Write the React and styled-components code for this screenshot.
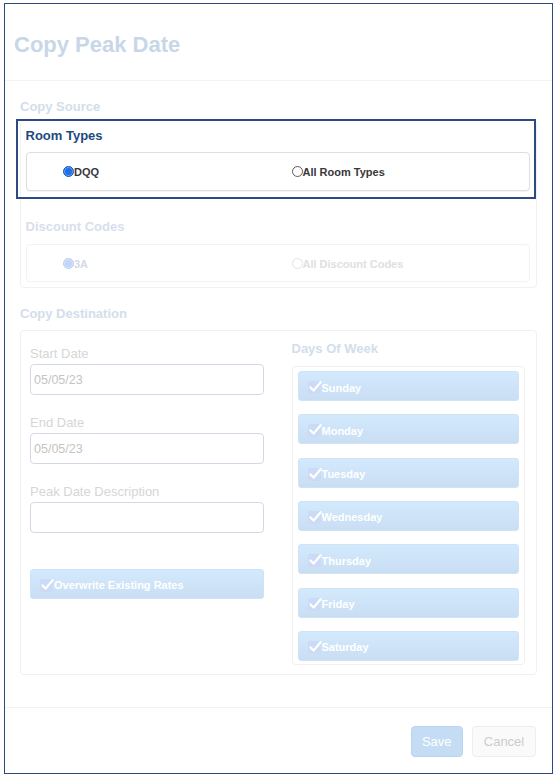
import React from "react";
import styled, { createGlobalStyle, css } from "styled-components";

const GlobalStyle = createGlobalStyle`
  body {
    margin: 0;
    background: #fff;
    font-family: "Liberation Sans", Arial, sans-serif;
  }
  * { box-sizing: border-box; }
`;

const Frame = styled.div`
  margin: 3px 0 0 4px;
  width: 549px;
  height: 771px;
  border: 1px solid #2a4a80;
  display: flex;
  flex-direction: column;
  background: #fff;
`;

const Header = styled.div`
  padding: 28px 9px 22px;
  border-bottom: 1px solid #f3f3f3;
`;

const Title = styled.h1`
  margin: 0;
  font-size: 22px;
  line-height: 26px;
  font-weight: 700;
  color: #c8d7e7;
`;

const Body = styled.div`
  padding: 17px 15px 0;
`;

const SectionTitle = styled.div`
  font-size: 13px;
  line-height: ${(p) => p.$lh || 18}px;
  font-weight: 700;
  color: ${(p) => p.$color || "#d2deeb"};
  margin-top: ${(p) => p.$top || 0}px;
  margin-bottom: ${(p) => p.$bottom || 0}px;
`;

const Panel = styled.div`
  border: 1px solid #f1f1f1;
  border-radius: 4px;
`;

const RadioSection = styled.div`
  position: relative;
  padding: ${(p) => p.$pad};
  ${(p) =>
    p.$highlight &&
    css`
      &::after {
        content: "";
        position: absolute;
        left: -5px;
        right: 0;
        top: -2px;
        bottom: 0;
        border: 2px solid #2b4b82;
        pointer-events: none;
      }
    `}
`;

const RadioCard = styled.div`
  height: ${(p) => p.$height}px;
  display: grid;
  grid-template-columns: 252px 1fr;
  align-items: center;
  border: 1px solid ${(p) => (p.$faded ? "#f3f3f3" : "#dedede")};
  border-radius: 4px;
  box-shadow: ${(p) => (p.$faded ? "none" : "0 1px 1px rgba(0,0,0,0.05)")};
  background: #fff;
`;

const RadioOption = styled.label`
  display: flex;
  align-items: center;
  padding-left: ${(p) => p.$indent}px;
  padding-top: 1px;
  font-size: 11px;
  font-weight: 700;
  color: ${(p) => p.$color};
`;

const RadioDot = styled.span`
  width: 11px;
  height: 11px;
  margin-top: -1px;
  border-radius: 50%;
  flex-shrink: 0;
  ${(p) =>
    p.$checked
      ? css`
          background: ${p.$tone};
          border: 1px solid ${p.$ring};
          box-shadow: inset 0 0 0 1px rgba(255, 255, 255, 0.35);
        `
      : css`
          background: #fff;
          border: 1px solid ${p.$ring};
        `}
`;

const DestPanel = styled(Panel)`
  display: grid;
  grid-template-columns: 1fr 1fr;
  column-gap: 28px;
  padding: 0 11px 0 9px;
`;

const LeftCol = styled.div`
  padding-top: 13px;
  display: flex;
  flex-direction: column;
`;

const Field = styled.div`
  display: flex;
  flex-direction: column;
  margin-bottom: 18px;
`;

const FieldLabel = styled.label`
  font-size: 13px;
  line-height: 20px;
  color: #d6d6d6;
`;

const TextInput = styled.input`
  height: 31px;
  width: 100%;
  border: 1px solid #d2d9e5;
  border-radius: 4px;
  padding: 0 3px;
  font-family: inherit;
  font-size: 12.5px;
  color: #c4c4c4;
  background: #fff;
  outline: none;
`;

const ToggleButton = styled.div`
  height: 30px;
  display: flex;
  align-items: center;
  padding: 3px 0 0 9px;
  margin-top: ${(p) => p.$top || 0}px;
  background: linear-gradient(#d3e9fc, #c9def3);
  border: 1px solid #cfe3f7;
  border-radius: 3px;
  color: #fff;
  font-size: 11px;
  font-weight: 700;
`;

const CheckBox = styled.span`
  position: relative;
  width: 13px;
  height: 13px;
  margin-right: 1px;
  border-radius: 2px;
  background: #cbdbf6;
  flex-shrink: 0;

  svg {
    position: absolute;
    left: 1px;
    top: -1px;
  }
`;

const RightCol = styled.div`
  padding: 8px 0 9px;
`;

const DaysPanel = styled(Panel)`
  display: flex;
  flex-direction: column;
  gap: 13.33px;
  padding: 4px 5px 3.5px;
  border-color: #f0f0f0;
`;

const Footer = styled.div`
  margin-top: auto;
  height: 66px;
  flex-shrink: 0;
  border-top: 1px solid #f3f3f3;
  display: flex;
  justify-content: flex-end;
  align-items: flex-start;
  gap: 9px;
  padding: 18px 16px 0;
`;

const FooterButton = styled.div`
  height: 31px;
  width: ${(p) => p.$width}px;
  display: flex;
  align-items: center;
  justify-content: center;
  border-radius: 4px;
  font-size: 13px;
  ${(p) =>
    p.$primary
      ? css`
          background: #c5ddf4;
          border: 1px solid #b9d3ee;
          color: #fff;
        `
      : css`
          background: #fafafa;
          border: 1px solid #eeeeee;
          color: #cccccc;
        `}
`;

const Check = () => (
  <CheckBox>
    <svg width="13" height="13" viewBox="0 0 13 13">
      <path
        d="M1.5 7.4 L4.6 10.6 L11.6 2.2"
        fill="none"
        stroke="#fff"
        strokeWidth="2.2"
        strokeLinecap="round"
        strokeLinejoin="round"
      />
    </svg>
  </CheckBox>
);

const days = ["Sunday", "Monday", "Tuesday", "Wednesday", "Thursday", "Friday", "Saturday"];

export default function App() {
  return (
    <>
      <GlobalStyle />
      <Frame>
        <Header>
          <Title>Copy Peak Date</Title>
        </Header>
        <Body>
          <SectionTitle $bottom={4}>Copy Source</SectionTitle>
          <Panel>
            <RadioSection $highlight $pad="5.5px 6px 8px 4.5px">
              <SectionTitle $color="#1e4a80" $bottom={7.5}>
                Room Types
              </SectionTitle>
              <RadioCard $height={39}>
                <RadioOption $indent={36.5} $color="#383838">
                  <RadioDot $checked $tone="#1f6fe6" $ring="#1658c8" />
                  DQQ
                </RadioOption>
                <RadioOption $indent={13} $color="#383838">
                  <RadioDot $ring="#5a5a5a" />
                  All Room Types
                </RadioOption>
              </RadioCard>
            </RadioSection>
            <RadioSection $pad="19px 6px 5px 4.5px">
              <SectionTitle $color="#d6e0ec" $bottom={8}>
                Discount Codes
              </SectionTitle>
              <RadioCard $height={38} $faded>
                <RadioOption $indent={36.5} $color="#d3dae5">
                  <RadioDot $checked $tone="#c2d6f6" $ring="#b9cff3" />
                  3A
                </RadioOption>
                <RadioOption $indent={13} $color="#e0e0e0">
                  <RadioDot $ring="#e3e3e3" />
                  All Discount Codes
                </RadioOption>
              </RadioCard>
            </RadioSection>
          </Panel>

          <SectionTitle $top={17} $bottom={7}>
            Copy Destination
          </SectionTitle>
          <DestPanel>
            <LeftCol>
              <Field>
                <FieldLabel>Start Date</FieldLabel>
                <TextInput readOnly defaultValue="05/05/23" />
              </Field>
              <Field>
                <FieldLabel>End Date</FieldLabel>
                <TextInput readOnly defaultValue="05/05/23" />
              </Field>
              <Field>
                <FieldLabel>Peak Date Description</FieldLabel>
                <TextInput readOnly defaultValue="" />
              </Field>
              <ToggleButton $top={17.5}>
                <Check />
                Overwrite Existing Rates
              </ToggleButton>
            </LeftCol>
            <RightCol>
              <SectionTitle $lh={20} $bottom={7}>
                Days Of Week
              </SectionTitle>
              <DaysPanel>
                {days.map((d) => (
                  <ToggleButton key={d}>
                    <Check />
                    {d}
                  </ToggleButton>
                ))}
              </DaysPanel>
            </RightCol>
          </DestPanel>
        </Body>
        <Footer>
          <FooterButton $primary $width={52.5}>
            Save
          </FooterButton>
          <FooterButton $width={64}>Cancel</FooterButton>
        </Footer>
      </Frame>
    </>
  );
}
